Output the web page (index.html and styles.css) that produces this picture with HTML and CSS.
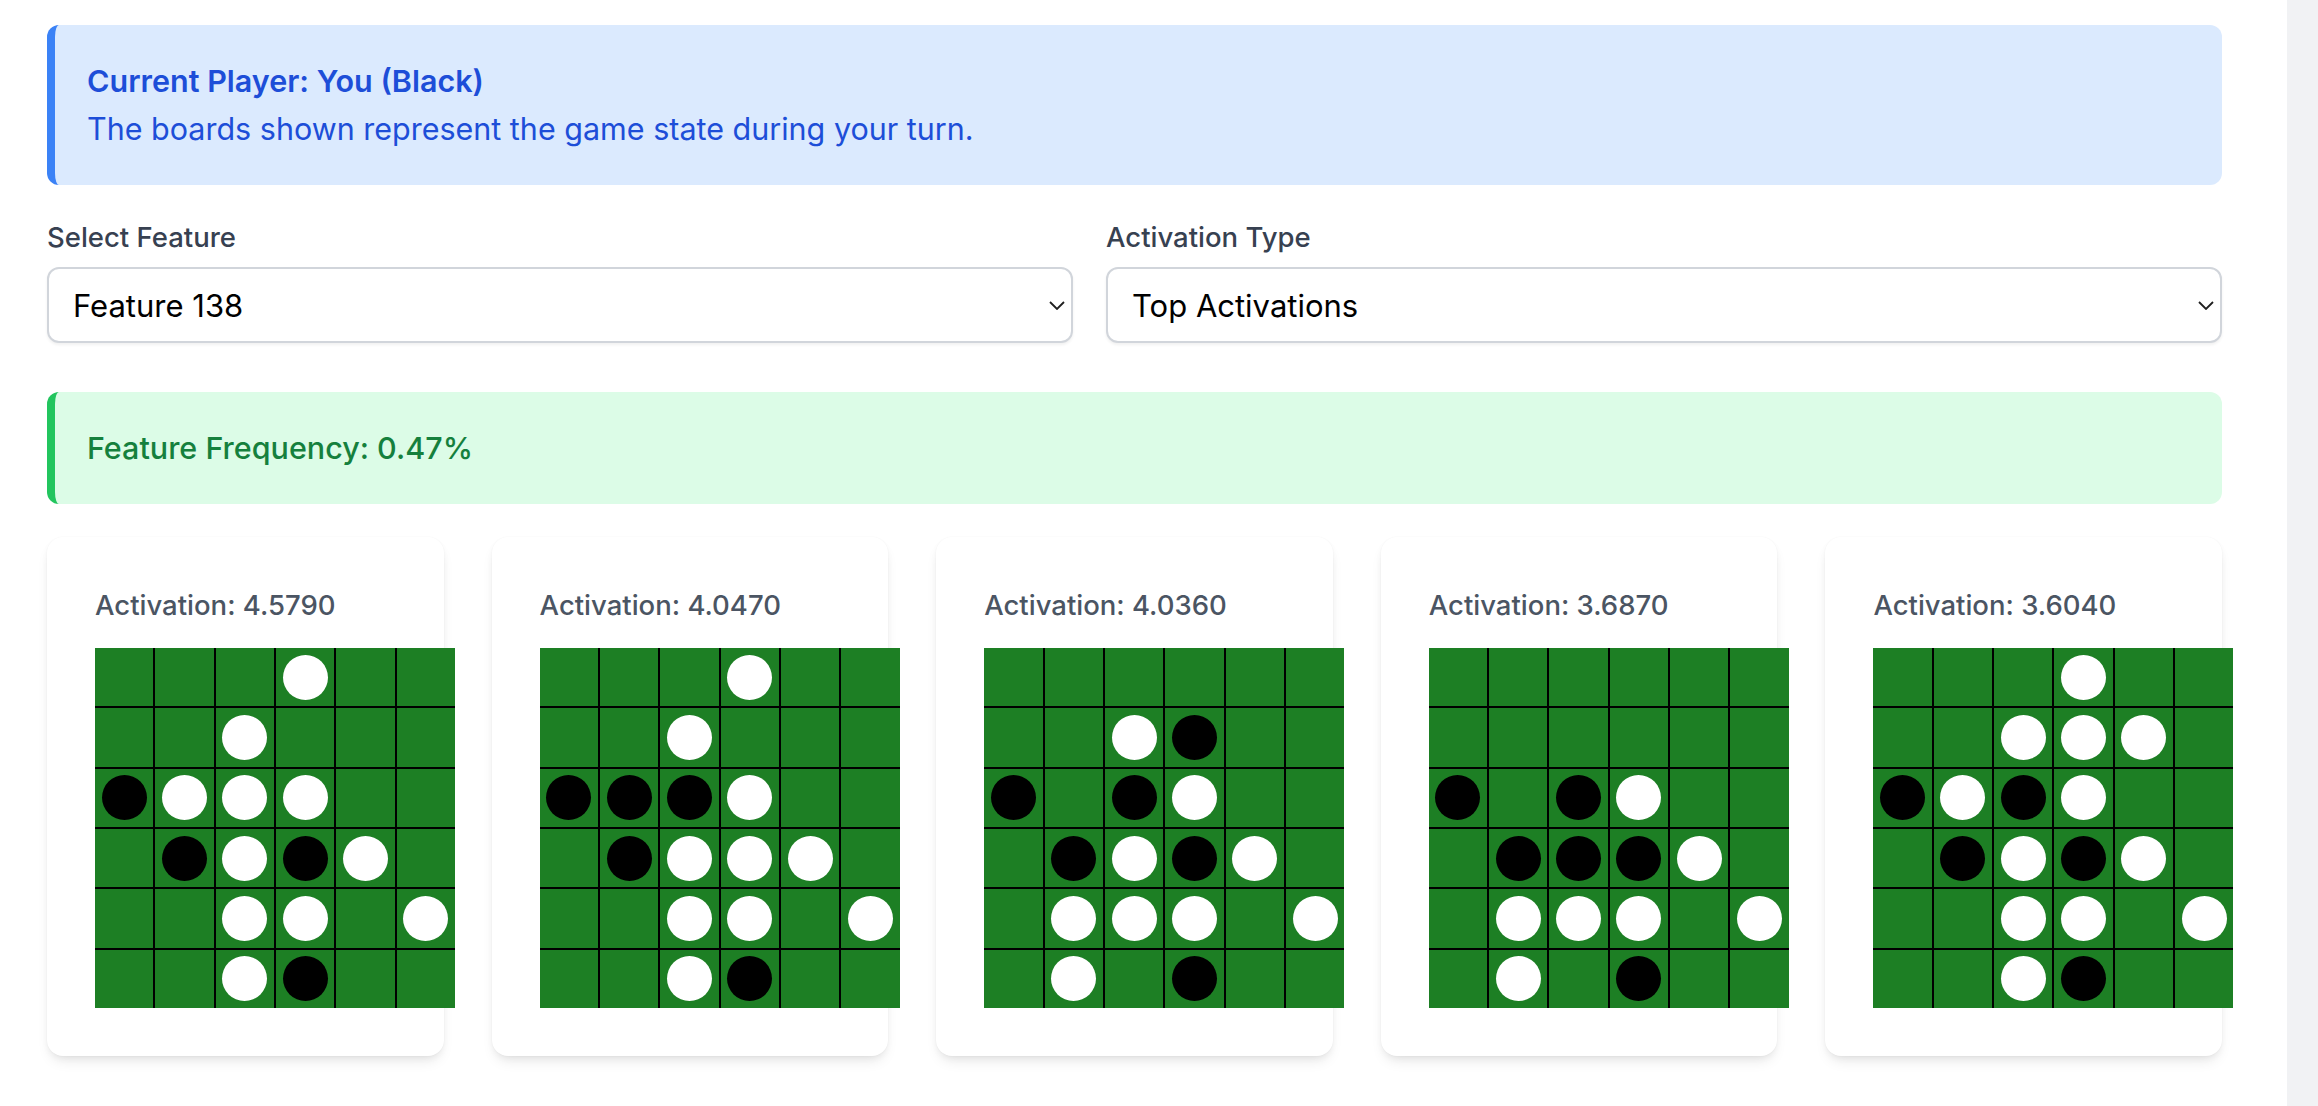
FILE: index.html
```html
<!DOCTYPE html>
<html lang="en">
<head>
<meta charset="utf-8">
<title>Feature Activations</title>
<link rel="stylesheet" href="styles.css">
</head>
<body>
<div class="page">
  <main class="main">
    <div class="alert alert-blue">
      <p class="alert-title">Current Player: You (Black)</p>
      <p class="alert-text">The boards shown represent the game state during your turn.</p>
    </div>

    <div class="controls">
      <div class="field">
        <label class="field-label" for="feature">Select Feature</label>
        <div class="select-wrap">
          <select id="feature" class="select"><option>Feature 138</option></select>
          <svg class="chevron" viewBox="0 0 16 9" width="16" height="9" aria-hidden="true"><path d="M1 1 L8 8 L15 1" fill="none" stroke="#1f1f1f" stroke-width="1.8"/></svg>
        </div>
      </div>
      <div class="field">
        <label class="field-label" for="atype">Activation Type</label>
        <div class="select-wrap">
          <select id="atype" class="select"><option>Top Activations</option></select>
          <svg class="chevron" viewBox="0 0 16 9" width="16" height="9" aria-hidden="true"><path d="M1 1 L8 8 L15 1" fill="none" stroke="#1f1f1f" stroke-width="1.8"/></svg>
        </div>
      </div>
    </div>

    <div class="alert alert-green">
      <p class="alert-text">Feature Frequency: 0.47%</p>
    </div>

    <div class="cards" id="cards"></div>
  </main>
  <div class="strip"></div>
</div>
<script src="app.js"></script>
</body>
</html>
```

FILE: styles.css
```css
* { box-sizing: border-box; }
html, body { margin: 0; padding: 0; }
body {
  font-family: Inter, "Noto Sans", "Liberation Sans", sans-serif;
  background: #ffffff;
  overflow: hidden;
  height: 1106px;
}
.page {
  display: flex;
  height: 1106px;
}
.main {
  flex: 1;
  min-width: 0;
  padding: 25px 65px 0 47px;
}
.strip {
  width: 31px;
  background: #f1f2f4;
}
p { margin: 0; }

.alert {
  border-left: 8px solid;
  border-radius: 12px;
  padding: 32px 32px;
  font-size: 30.5px;
  line-height: 48px;
}
.alert-blue {
  background: #dbeafe;
  border-left-color: #3b82f6;
  color: #1d4ed8;
}
.alert-title { font-weight: 600; }
.alert-text { font-weight: 400; }
.alert-green {
  background: #dcfce7;
  border-left-color: #22c55e;
  color: #15803d;
  margin-bottom: 33px;
}
.alert-green .alert-text { font-weight: 500; }

.controls {
  display: grid;
  grid-template-columns: 1026fr 1116fr;
  column-gap: 33px;
  margin-top: 32px;
  margin-bottom: 49px;
}
.field { display: flex; flex-direction: column; min-width: 0; }
.field-label {
  font-size: 27.5px;
  line-height: 40px;
  font-weight: 500;
  color: #374151;
  margin-bottom: 10px;
}
.select-wrap { position: relative; }
.select {
  -webkit-appearance: none;
  appearance: none;
  width: 100%;
  height: 76px;
  border: 2px solid #d1d5db;
  border-radius: 12px;
  background: #ffffff;
  padding: 0 60px 0 24px;
  font-family: Inter, "Noto Sans", "Liberation Sans", sans-serif;
  font-size: 31px;
  color: #000000;
  box-shadow: 0 2px 3px rgba(0, 0, 0, 0.06);
  outline: none;
}
.chevron {
  position: absolute;
  right: 8px;
  top: 34px;
  width: 16px;
  height: 9px;
  pointer-events: none;
}

.cards {
  display: grid;
  grid-template-columns: repeat(5, minmax(0, 1fr));
  column-gap: 48px;
}
.card {
  background: #ffffff;
  border-radius: 16px;
  padding: 48px;
  box-shadow: 0 8px 14px -4px rgba(0, 0, 0, 0.10), 0 3px 8px -3px rgba(0, 0, 0, 0.08), 0 0 2px rgba(0, 0, 0, 0.04);
  min-width: 0;
}
.card-label {
  font-size: 27.5px;
  line-height: 40px;
  font-weight: 500;
  color: #4b5563;
  margin-bottom: 23px;
  white-space: nowrap;
}
.board {
  width: 360px;
  height: 360px;
  display: grid;
  grid-template-columns: repeat(6, 1fr);
  grid-template-rows: repeat(6, 1fr);
  gap: 2px;
  background: #000000;
}
.cell {
  background: #1d7f24;
  display: flex;
  align-items: center;
  justify-content: center;
}
.disc {
  width: 45px;
  height: 45px;
  border-radius: 50%;
}
.disc-w { background: #ffffff; }
.disc-b { background: #000000; }
```

FILE: app.js
```js
const boards = [
  { act: "4.5790", rows: ["...W..", "..W...", "BWWW..", ".BWBW.", "..WW.W", "..WB.."] },
  { act: "4.0470", rows: ["...W..", "..W...", "BBBW..", ".BWWW.", "..WW.W", "..WB.."] },
  { act: "4.0360", rows: ["......", "..WB..", "B.BW..", ".BWBW.", ".WWW.W", ".W.B.."] },
  { act: "3.6870", rows: ["......", "......", "B.BW..", ".BBBW.", ".WWW.W", ".W.B.."] },
  { act: "3.6040", rows: ["...W..", "..WWW.", "BWBW..", ".BWBW.", "..WW.W", "..WB.."] }
];
const container = document.getElementById("cards");
boards.forEach(b => {
  const card = document.createElement("div");
  card.className = "card";
  const label = document.createElement("p");
  label.className = "card-label";
  label.textContent = "Activation: " + b.act;
  card.appendChild(label);
  const board = document.createElement("div");
  board.className = "board";
  b.rows.forEach(row => {
    for (const ch of row) {
      const cell = document.createElement("div");
      cell.className = "cell";
      if (ch === "W" || ch === "B") {
        const d = document.createElement("div");
        d.className = "disc " + (ch === "W" ? "disc-w" : "disc-b");
        cell.appendChild(d);
      }
      board.appendChild(cell);
    }
  });
  card.appendChild(board);
  container.appendChild(card);
});
```
